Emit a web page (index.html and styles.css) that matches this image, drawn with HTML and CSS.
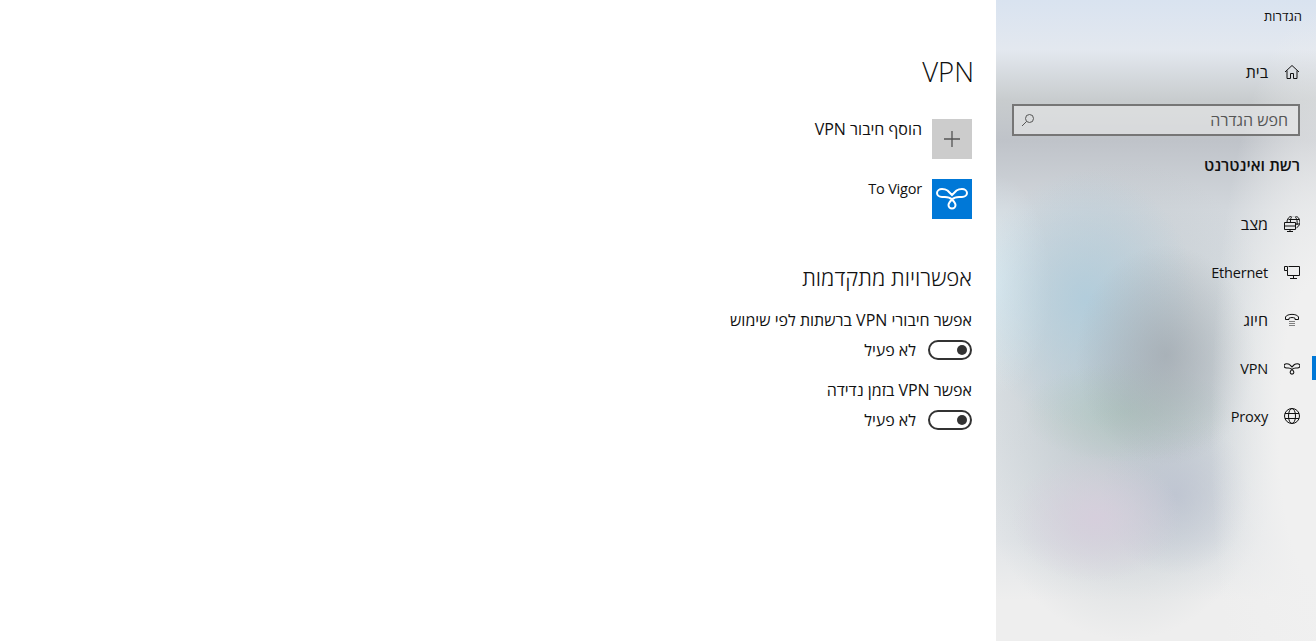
FILE: index.html
```html
<!DOCTYPE html>
<html lang="he" dir="rtl">
<head>
<meta charset="utf-8">
<title>הגדרות</title>
<link rel="stylesheet" href="styles.css">
</head>
<body>
<div class="app">
  <aside class="sidebar">
    <div class="app-title">הגדרות</div>
    <a class="nav-item home">
      <svg class="icon" viewBox="0 0 16 16"><path d="M1 8 8 1.500 15 8M3 6.500V14.500H6.500V9.500H9.500V14.500H13V6.500"/></svg>
      <span>בית</span>
    </a>
    <div class="search">
      <span class="search-text">חפש הגדרה</span>
      <svg class="search-icon" viewBox="0 0 14 14"><circle cx="8.500" cy="5.500" r="4"/><path d="M5.500 8.500 1 13"/></svg>
    </div>
    <div class="section-title">רשת ואינטרנט</div>
    <nav class="nav">
      <a class="nav-item">
        <svg class="icon" viewBox="0 0 16 16"><path d="M3 6.500A6.500 6.500 0 1 1 12.500 11.800M7.500 1C6.500 2.500 6.300 4.500 6.500 6.500M11.500 1C13 3 13.500 6 13 9M4.500 3.500H15M12 8H15.500M.5 6.500H11.500V13.500H.5ZM.5 10H11.500M6 13.500V15.500M3 15.500H9"/></svg>
        <span>מצב</span>
      </a>
      <a class="nav-item">
        <svg class="icon" viewBox="0 0 16 16"><path d="M4.500 2.500H15.500V11.500H3.500V6.500M.5 2.500H3.500V6.500H.5ZM9.500 11.500V14.500M6 14.500H13"/></svg>
        <span class="latin" dir="ltr">Ethernet</span>
      </a>
      <a class="nav-item">
        <svg class="icon" viewBox="0 0 16 16"><path d="M1.500 7.500V5C3 1.500 13 1.500 14.500 5V7.500H11V6.200C9.500 5.300 6.500 5.300 5 6.200V7.500ZM5.500 9.500H6.500M7.500 9.500H8.500M9.500 9.500H10.500M5.500 11.500H6.500M7.500 11.500H8.500M9.500 11.500H10.500M5.500 13.500H6.500M7.500 13.500H8.500M9.500 13.500H10.500"/></svg>
        <span>חיוג</span>
      </a>
      <a class="nav-item selected">
        <svg class="icon" viewBox="5 3 30 30"><path class="knot" d="M15.500 11.500 20 16 24.500 11.500C26 10.500 28 10 30 10A5 4 0 0 1 30 18C26 18 23.500 17 20 20.500C17.500 23 16.500 24 16.500 26A3.500 3.500 0 0 0 23.500 26C23.500 24 22.500 23 20 20.500C16.500 17 14 18 10 18A5 4 0 0 1 10 10C12 10 14 10.500 15.500 11.500"/></svg>
        <span class="latin" dir="ltr">VPN</span>
      </a>
      <a class="nav-item">
        <svg class="icon" viewBox="0 0 16 16"><circle cx="8" cy="8" r="7.500"/><ellipse cx="8" cy="8" rx="3.500" ry="7.500"/><path d="M1 5.500H15M1 10.500H15"/></svg>
        <span class="latin" dir="ltr">Proxy</span>
      </a>
    </nav>
  </aside>

  <main class="content">
    <h1 class="page-title"><span dir="ltr">VPN</span></h1>
    <div class="connections">
      <div class="connection">
        <div class="tile tile-add">
          <svg class="tile-plus" viewBox="0 0 16 16"><path d="M8 0V16M0 8H16"/></svg>
        </div>
        <div class="connection-name">הוסף חיבור VPN</div>
      </div>
      <div class="connection">
        <div class="tile tile-vpn">
          <svg class="tile-vpn-icon" viewBox="0 0 40 40"><path d="M15.500 11.500 20 16 24.500 11.500C26 10.500 28 10 30 10A5 4 0 0 1 30 18C26 18 23.500 17 20 20.500C17.500 23 16.500 24 16.500 26A3.500 3.500 0 0 0 23.500 26C23.500 24 22.500 23 20 20.500C16.500 17 14 18 10 18A5 4 0 0 1 10 10C12 10 14 10.500 15.500 11.500"/></svg>
        </div>
        <div class="connection-name latin" dir="ltr">To Vigor</div>
      </div>
    </div>
    <h2 class="section-heading">אפשרויות מתקדמות</h2>
    <div class="option">
      <div class="option-label">אפשר חיבורי VPN ברשתות לפי שימוש</div>
      <div class="toggle-row">
        <span class="toggle"><span class="knob"></span></span>
        <span>לא פעיל</span>
      </div>
    </div>
    <div class="option">
      <div class="option-label">אפשר VPN בזמן נדידה</div>
      <div class="toggle-row">
        <span class="toggle"><span class="knob"></span></span>
        <span>לא פעיל</span>
      </div>
    </div>
  </main>
</div>
</body>
</html>
```
FILE: styles.css
```css
* { box-sizing: border-box; }
html, body { margin: 0; height: 100%; }
body {
  font-family: "Open Sans", "Noto Sans", "Liberation Sans", sans-serif;
  color: #111;
  background: #fff;
  overflow: hidden;
}
.app { display: flex; height: 641px; }
.latin { font-size: 14.500px; letter-spacing: -.2px; }

.sidebar {
  width: 320px;
  flex: none;
  padding-top: 8px;
  background:
    radial-gradient(ellipse 105px 420px at 320px 430px, #f0f0f0 35%, rgba(240,240,240,0) 100%),
    radial-gradient(ellipse 90px 110px at 170px 355px, rgba(160,168,175,.75), rgba(160,168,175,0)),
    radial-gradient(ellipse 105px 50px at 130px 412px, rgba(172,198,188,.65), rgba(172,198,188,0)),
    radial-gradient(ellipse 85px 65px at 100px 518px, rgba(214,206,220,.95), rgba(214,206,220,0)),
    radial-gradient(ellipse 75px 80px at 180px 495px, rgba(188,194,208,.8), rgba(188,194,208,0)),
    radial-gradient(ellipse 110px 130px at 90px 300px, rgba(174,204,220,.85), rgba(174,204,220,0)),
    radial-gradient(ellipse 55px 110px at 0 285px, rgba(220,234,240,.95), rgba(220,234,240,0)),
    radial-gradient(ellipse 165px 240px at 130px 400px, rgba(184,194,200,.95), rgba(184,194,200,0)),
    linear-gradient(180deg, #d9e3f0 0, #e3e8ef 50px, #c8ccce 100px, #bfc3c9 140px, #d2d7dc 210px, #dde2e5 320px, #e2e5e8 540px, #eeeeee 600px, #eeeeee 641px);
}
.app-title {
  font-size: 13px;
  line-height: 16px;
  height: 16px;
  padding: 0 14px;
  margin-bottom: 24px;
}
.nav-item {
  display: flex;
  align-items: center;
  height: 48px;
  font-size: 16px;
  position: relative;
  padding-right: 16px;
  gap: 16px;
}
.icon {
  width: 16px;
  height: 16px;
  flex: none;
  fill: none;
  stroke: #111;
  stroke-width: 1;
}
.knot { stroke-width: 2; }
.search {
  display: flex;
  align-items: center;
  justify-content: space-between;
  height: 32px;
  margin: 8px 16px 0;
  padding: 0 10px;
  border: 2px solid #767676;
  background: rgba(235,235,235,.55);
  font-size: 16px;
  color: #555;
}
.search-icon {
  width: 14px;
  height: 14px;
  margin-left: -3px;
  fill: none;
  stroke: #555;
  stroke-width: 1;
}
.section-title {
  font-size: 16px;
  font-weight: 600;
  line-height: 20px;
  padding: 19px 16px 25px 0;
}
.selected::before {
  content: "";
  position: absolute;
  right: 0;
  top: 12px;
  width: 4px;
  height: 24px;
  background: #0078d7;
}

.content {
  flex: 1;
  padding: 0 24px 0 0;
}
.page-title {
  font-size: 27.500px;
  font-weight: 300;
  line-height: 40px;
  margin: 52px -2px 0 0;
}
.connections {
  display: flex;
  flex-direction: column;
  gap: 20px;
  margin-top: 27px;
}
.connection { display: flex; gap: 10px; font-size: 16px; }
.connection-name { line-height: 20px; }
.tile {
  width: 40px;
  height: 40px;
  flex: none;
  display: flex;
  align-items: center;
  justify-content: center;
}
.tile-add { background: #cccccc; }
.tile-plus { width: 16px; height: 16px; fill: none; stroke: #555; stroke-width: 1.300; }
.tile-vpn { background: #0078d7; }
.tile-vpn-icon { width: 40px; height: 40px; fill: none; stroke: #fff; stroke-width: 2; }
.section-heading {
  font-size: 22.200px;
  font-weight: 300;
  line-height: 28px;
  margin: 45px 0 0;
}
.option { font-size: 16px; }
.option-label { line-height: 20px; margin-top: 18px; }
.option + .option .option-label { margin-top: 20px; }
.toggle-row {
  display: flex;
  align-items: center;
  gap: 12px;
  height: 20px;
  margin-top: 10px;
}
.toggle {
  width: 44px;
  height: 20px;
  border: 2px solid #333;
  border-radius: 10px;
  display: flex;
  align-items: center;
  padding-right: 3px;
}
.knob { width: 10px; height: 10px; border-radius: 50%; background: #333; }
```
